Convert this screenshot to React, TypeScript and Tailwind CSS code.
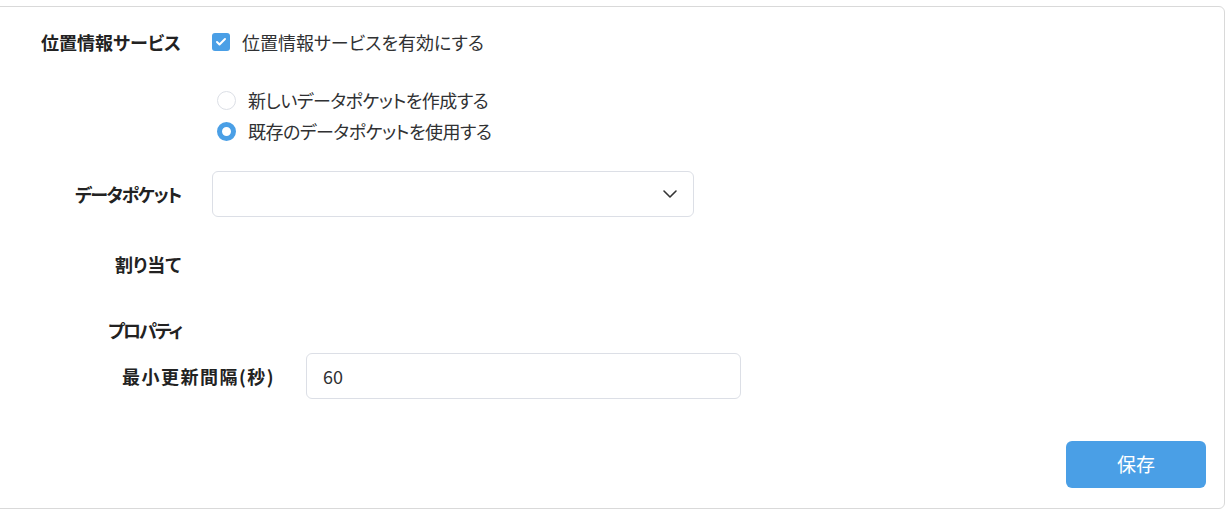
import React, { useState } from "react";
import { Check, ChevronDown } from "lucide-react";

const font =
  "font-['Noto_Sans_CJK_JP','Noto_Sans',sans-serif] [font-feature-settings:'palt']";

const App: React.FC = () => {
  const [enabled, setEnabled] = useState(true);
  const [mode, setMode] = useState<"new" | "existing">("existing");
  const [interval, setInterval] = useState("60");

  return (
    <div className={`min-h-screen bg-white pt-[6px] pr-[6px] text-[18px] text-[#303133] ${font}`}>
      <div className="ml-[-10px] h-[503px] rounded-md border border-[#d9d9d9] bg-white">
        {/* 位置情報サービス */}
        <div className="mt-[18px] flex h-[34px] items-center">
          <div className="w-[190px] text-right font-bold text-[#222]">位置情報サービス</div>
          <label className="ml-[31px] flex cursor-pointer items-center gap-3">
            <button
              type="button"
              onClick={() => setEnabled(!enabled)}
              className={`flex h-[18px] w-[18px] items-center justify-center rounded-[3px] ${
                enabled ? "bg-[#4a9fe6]" : "border border-[#d9d9d9] bg-white"
              }`}
            >
              {enabled && <Check size={12} strokeWidth={4} className="text-white" />}
            </button>
            <span>位置情報サービスを有効にする</span>
          </label>
        </div>

        {/* データポケット mode */}
        <div className="mt-[26px] pl-[226px] tracking-[-0.5px]">
          <label className="flex h-[31px] cursor-pointer items-center gap-3" onClick={() => setMode("new")}>
            <span
              className={`h-[19px] w-[19px] rounded-full ${
                mode === "new" ? "border-[5px] border-[#4a9fe6]" : "border border-[#dcdfe6]"
              }`}
            />
            <span>新しいデータポケットを作成する</span>
          </label>
          <label className="flex h-[31px] cursor-pointer items-center gap-3" onClick={() => setMode("existing")}>
            <span
              className={`h-[19px] w-[19px] rounded-full ${
                mode === "existing" ? "border-[5px] border-[#4a9fe6]" : "border border-[#dcdfe6]"
              }`}
            />
            <span>既存のデータポケットを使用する</span>
          </label>
        </div>

        {/* データポケット select */}
        <div className="mt-[24px] flex items-center">
          <div className="w-[190px] text-right font-bold tracking-[-1.4px] text-[#222]">データポケット</div>
          <button
            type="button"
            className="ml-[31px] flex h-[46px] w-[482px] items-center justify-end rounded-md border border-[#dcdfe6] bg-white pr-[11px]"
          >
            <ChevronDown size={24} strokeWidth={1.6} className="text-[#333]" />
          </button>
        </div>

        {/* 割り当て */}
        <div className="mt-[24px] flex h-[46px] items-center">
          <div className="w-[190px] text-right font-bold text-[#222]">割り当て</div>
        </div>

        {/* プロパティ */}
        <div className="mt-[26px] flex h-[34px] items-center">
          <div className="w-[190px] text-right font-bold tracking-[-2px] text-[#222]">プロパティ</div>
        </div>

        <div className="mt-[6px] flex items-center">
          <div className="w-[284px] text-right font-bold tracking-[1.5px] text-[#222]">最小更新間隔(秒)</div>
          <input
            value={interval}
            onChange={(e) => setInterval(e.target.value)}
            className="ml-[31px] h-[46px] w-[435px] rounded-md border border-[#dcdfe6] px-[16px] text-[18px] text-[#303133] outline-none"
          />
        </div>

        <div className="mt-[42px] flex justify-end pr-[18px]">
          <button
            type="button"
            className="h-[47px] w-[140px] rounded-md bg-[#4a9fe6] text-[19px] text-white"
          >
            保存
          </button>
        </div>
      </div>
    </div>
  );
};

export default App;
